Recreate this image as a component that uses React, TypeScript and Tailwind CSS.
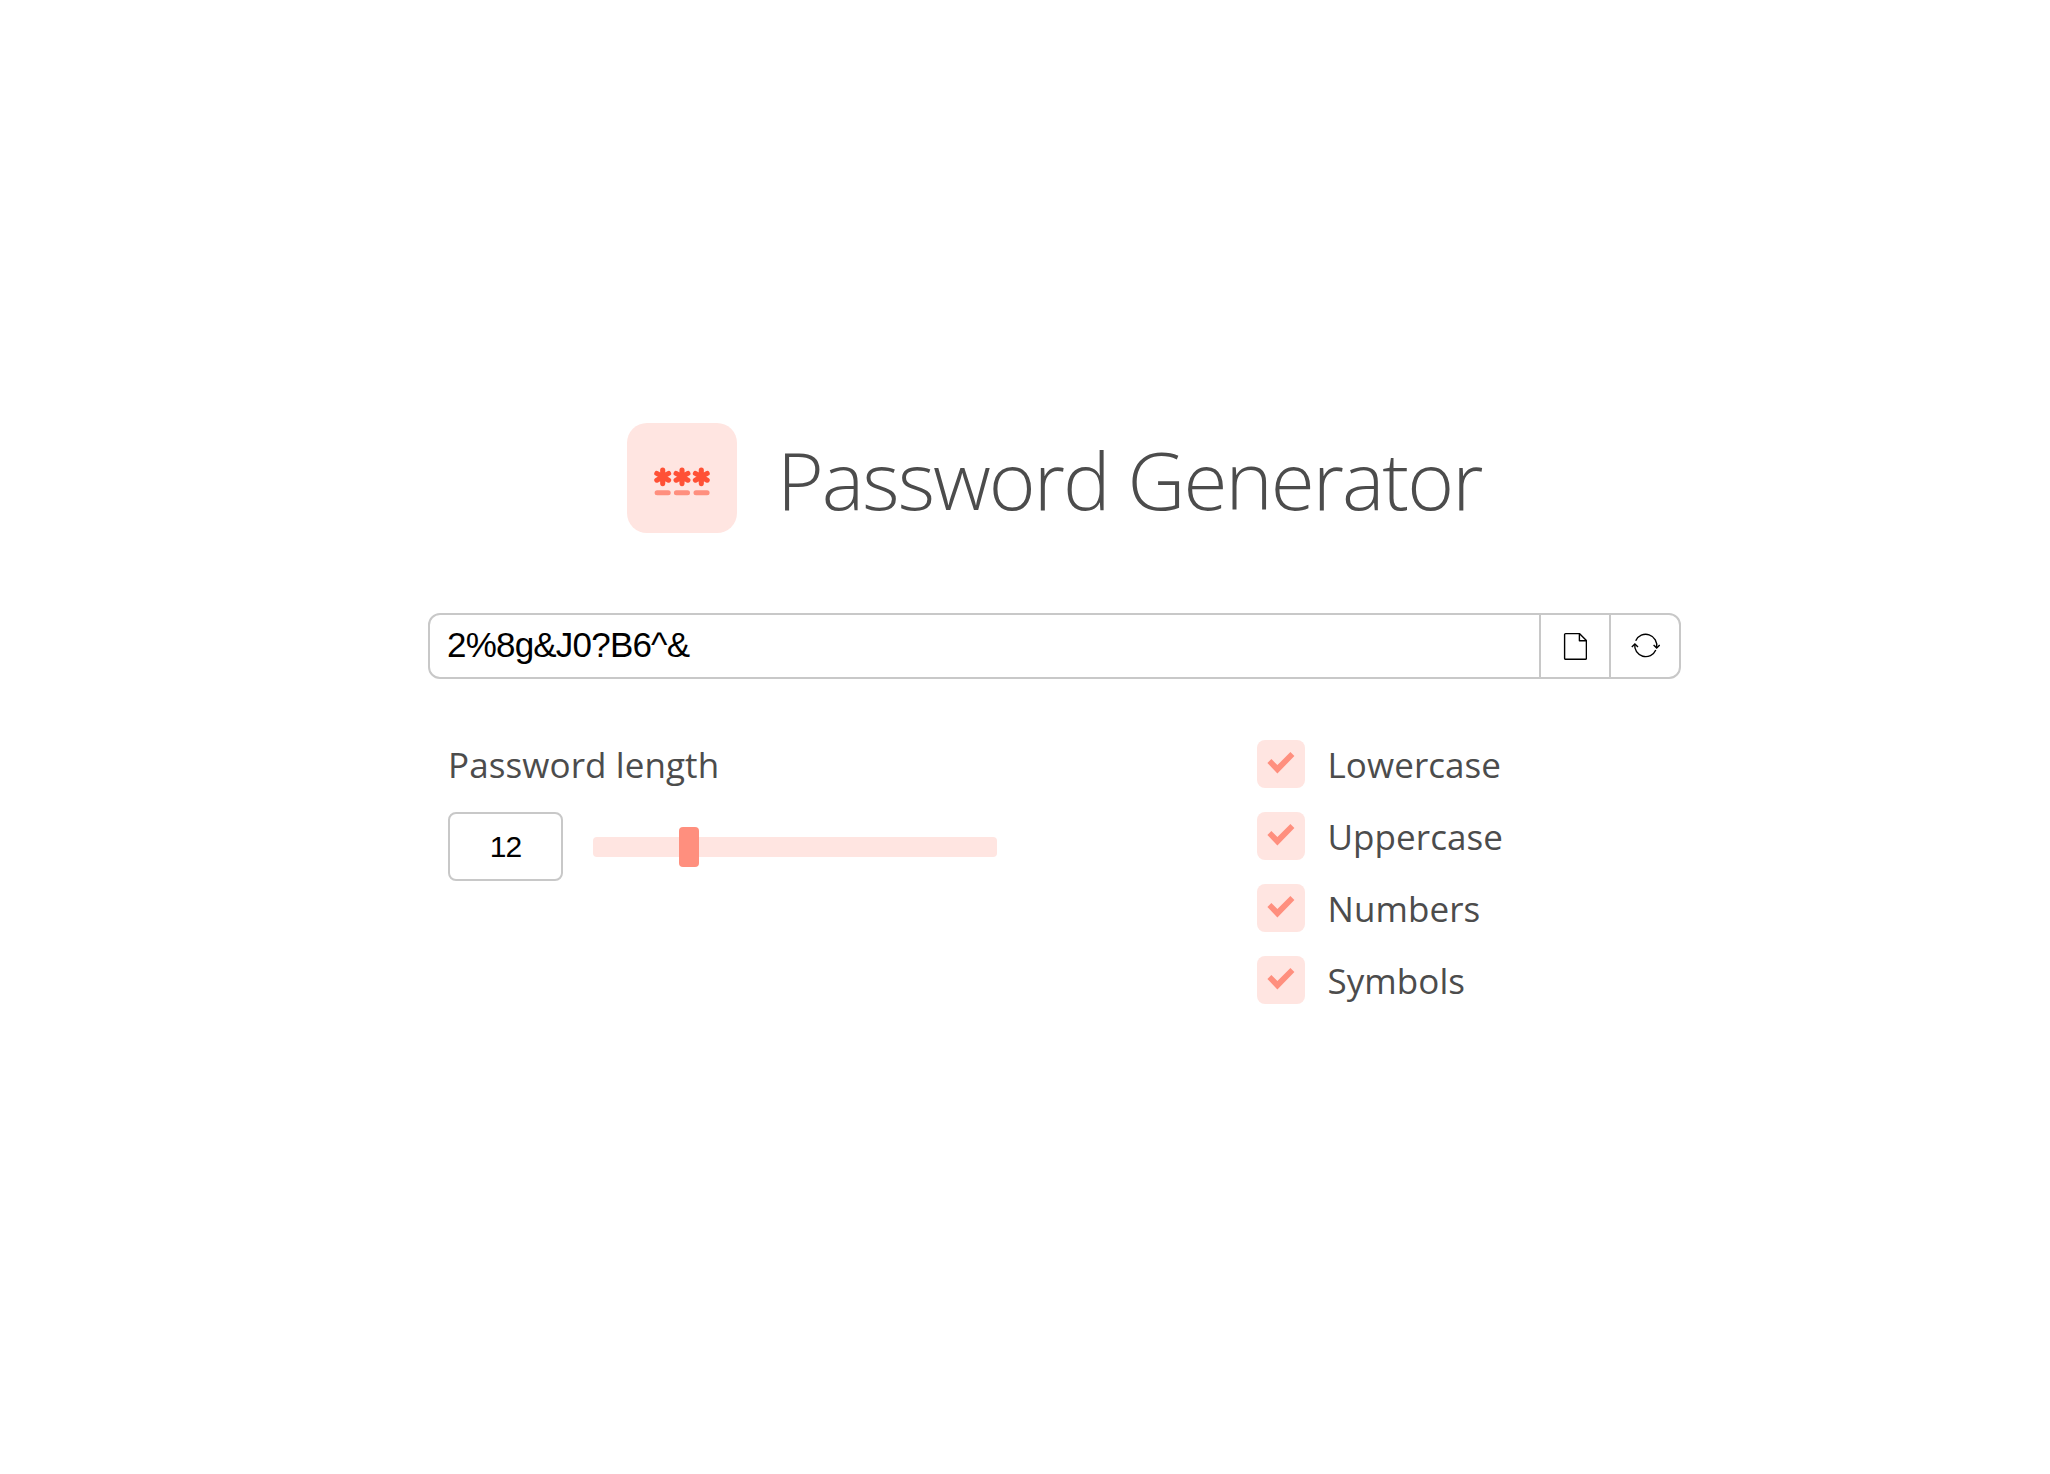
const OPTIONS = ["Lowercase", "Uppercase", "Numbers", "Symbols"];

function Star({ cx }: { cx: number }) {
  return (
    <path
      d={`M${cx} 47v13.6M${cx - 5.9} 50.4l11.8 6.8M${cx - 5.9} 57.2l11.8 -6.8`}
      stroke="#ff5136"
      strokeWidth="5.1"
      strokeLinecap="round"
    />
  );
}

function Logo() {
  return (
    <div className="size-[110px] shrink-0 rounded-[20px] bg-[#ffe5e1]">
      <svg viewBox="0 0 110 110" className="size-full" fill="none">
        <Star cx={35.7} />
        <Star cx={55} />
        <Star cx={74.3} />
        <path d="M30.1 69.7h11.1M49.4 69.7h11.1M69 69.7h11.1" stroke="#ff8f7e" strokeWidth="5" strokeLinecap="round" />
      </svg>
    </div>
  );
}

function FileIcon() {
  return (
    <svg viewBox="0 0 24 28" className="h-7 w-6" fill="none" stroke="#000" strokeWidth="1.4" strokeLinejoin="round">
      <path d="M2.6 1.6h13.8l7 7v17.6a1 1 0 0 1-1 1H2.6a1 1 0 0 1-1-1V2.6a1 1 0 0 1 1-1z" />
      <path d="M16.4 1.8v6.9h6.8" />
    </svg>
  );
}

function RefreshIcon() {
  return (
    <svg viewBox="0 0 30 30" className="size-[30px]" fill="none" stroke="#000" strokeWidth="1.4">
      <path d="M5.7 9.8A11 11 0 0 1 26.5 16.6M25.8 19A11 11 0 0 1 4.8 13.2" />
      <path d="M23.6 14l3.1 3 3-3M1.8 16l3.1-3 3.1 3" />
    </svg>
  );
}

function Option({ label }: { label: string }) {
  return (
    <label className="flex h-12 items-center gap-[22.5px]">
      <span className="size-12 rounded-lg bg-[#ffe5e1]">
        <svg viewBox="0 0 48 48" className="size-12">
          <path d="M10.4 23.1l4-4 6 6 13-13 4 4-17 17.3z" fill="#ff8f7e" />
        </svg>
      </span>
      <span className="pt-[2px] leading-[48px] tracking-[0.07px]">{label}</span>
    </label>
  );
}

export default function App() {
  return (
    <main className="flex h-[1474px] w-full flex-col bg-white pl-[428px] pt-[423px] font-['Open_Sans',sans-serif] text-[35px] text-[#4c4c4c]">
      <header className="flex h-[110px] items-center pl-[199px]">
        <Logo />
        <h1 className="ml-[40px] whitespace-nowrap pt-px text-[80px] font-light leading-[110px] tracking-[-1.94px]">Password Generator</h1>
      </header>

      <div className="mt-20 flex h-[66px] w-[1253px] divide-x-2 divide-[#c8c8c8] rounded-xl border-2 border-[#c8c8c8] font-['Liberation_Sans',sans-serif] text-[35px] text-black">
        <div className="flex flex-1 items-center pb-0.5 pl-[17px] tracking-[-0.8px]">2%8g&amp;J0?B6^&amp;</div>
        <button className="flex w-[70px] items-center justify-center">
          <FileIcon />
        </button>
        <button className="flex w-[68px] items-center justify-center">
          <RefreshIcon />
        </button>
      </div>

      <div className="mt-[61px] flex">
        <section className="w-[829px] pl-5">
          <h2 className="h-12 pt-px leading-[48px] tracking-[0.1px]">Password length</h2>
          <div className="mt-6 flex items-center">
            <div className="flex h-[69px] w-[115px] items-center justify-center rounded-lg border-2 border-[#c8c8c8] font-['Liberation_Sans',sans-serif] text-[30px] tracking-[-1px] text-black">12</div>
            <div className="ml-[30px] flex h-5 w-[404px] items-center rounded bg-[#ffe5e1] pl-[86px]">
              <div className="h-10 w-5 rounded bg-[#ff8f7e]" />
            </div>
          </div>
        </section>
        <section className="flex flex-col gap-6">
          {OPTIONS.map((label) => (
            <Option key={label} label={label} />
          ))}
        </section>
      </div>
    </main>
  );
}
